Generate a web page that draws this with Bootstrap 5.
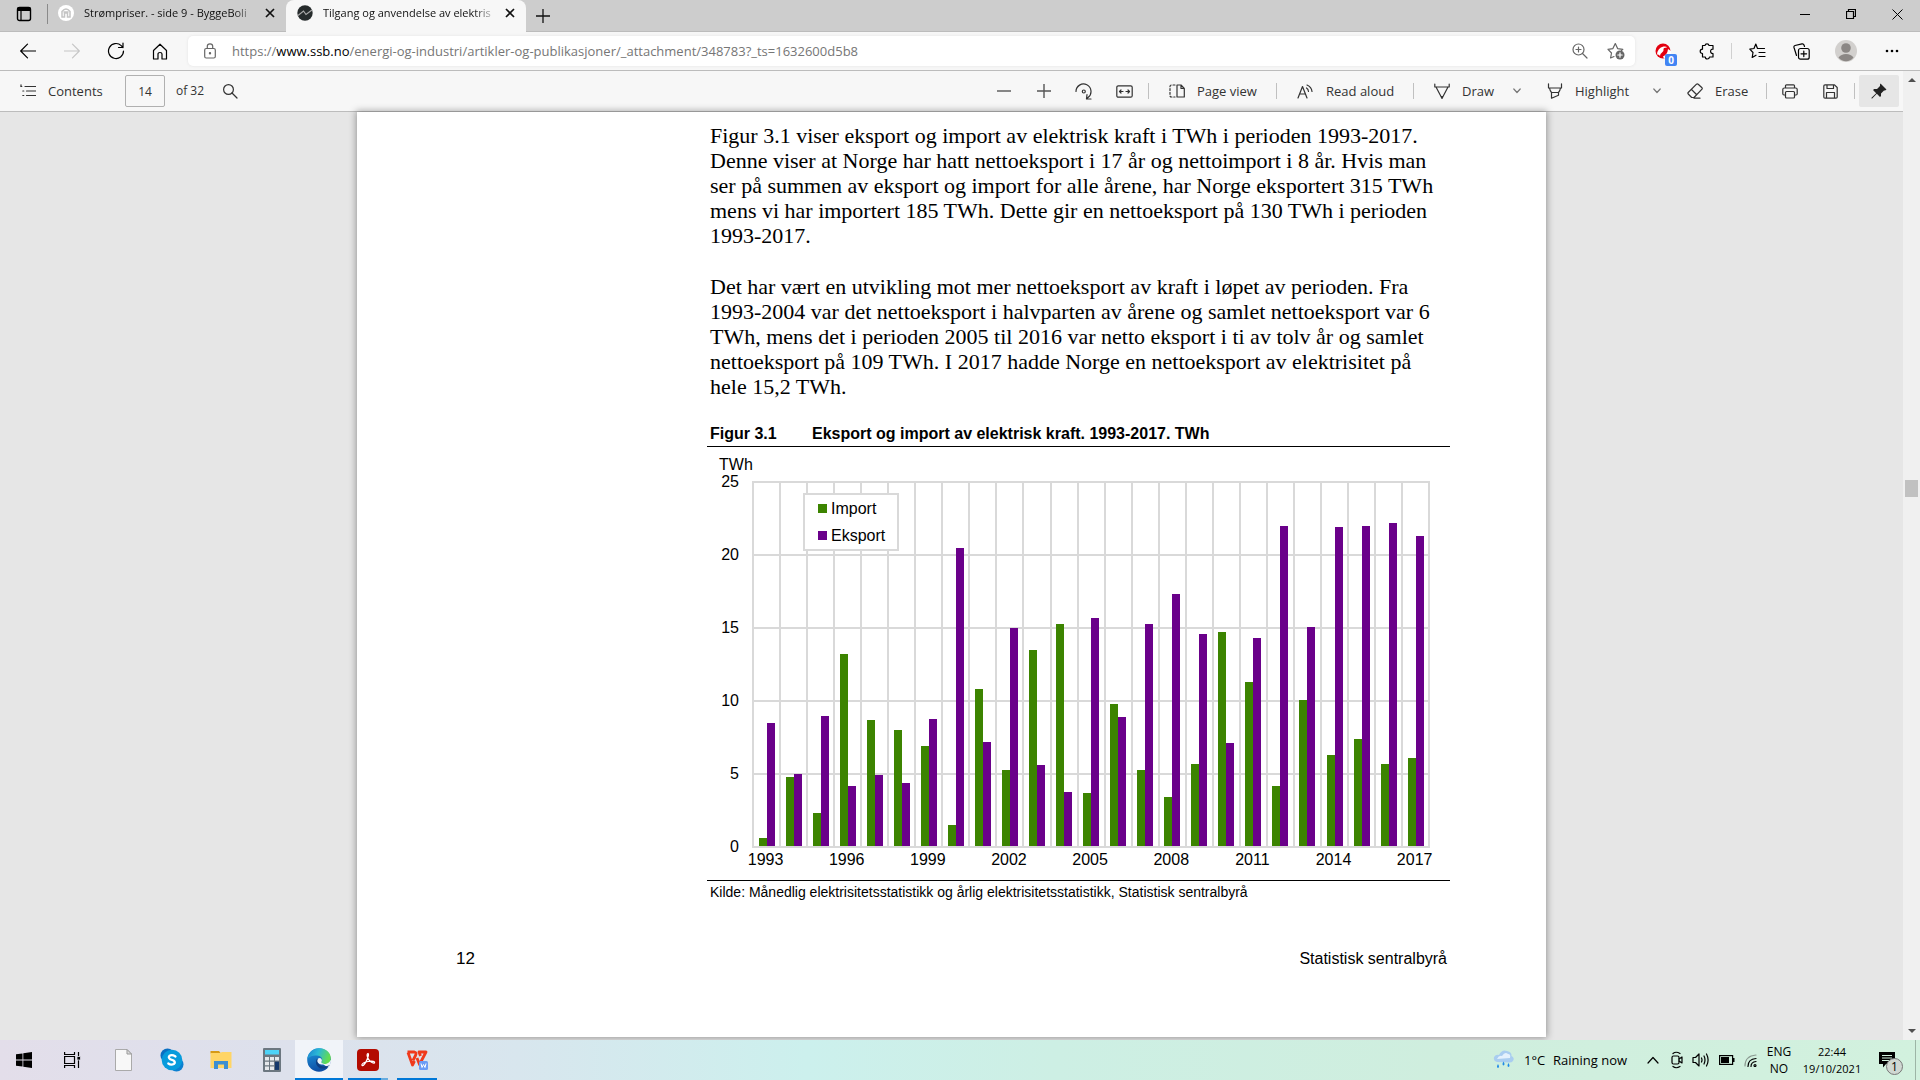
<!DOCTYPE html>
<html lang="no">
<head>
<meta charset="utf-8">
<meta name="viewport" content="width=device-width, initial-scale=1">
<title>Tilgang og anvendelse av elektrisitet</title>
<link href="https://cdn.jsdelivr.net/npm/bootstrap@5.3.0/dist/css/bootstrap.min.css" rel="stylesheet">
<style>
  body { font-family: "Open Sans", "Noto Sans", sans-serif; font-size: 13px; line-height: 20px; color: #000; background: #e6e6e6; }
  svg { display: block; flex: none; }
  .ln { fill: none; stroke: currentColor; stroke-width: 1.2; stroke-linecap: round; stroke-linejoin: round; }
  .plainbtn { background: none; border: 0; padding: 0; color: inherit; font-size: inherit; line-height: inherit; display: flex; align-items: center; justify-content: center; flex: none; }
  .w24 { width: 24px; } .w26 { width: 26px; } .w34 { width: 34px; } .w36 { width: 36px; } .w40 { width: 40px; } .w44 { width: 44px; } .w46 { width: 46px; } .w47 { width: 47px; } .w48 { width: 48px; } .w54 { width: 54px; }
  .divider { width: 1px; flex: none; background: #c0c0c0; }

  .tabstrip { height: 32px; background: #cdcdcd; border-bottom: 1px solid #bcbcbc; }
  .tabstrip .divider { height: 20px; background: #8a8a8a; }
  .tabitem { width: 238px; height: 32px; padding: 0 10px 6px 10px; gap: 10px; font-size: 11px; }
  .tabitem.current { width: 240px; background: #f7f7f7; border-radius: 8px 8px 0 0; padding-left: 11px; }
  .tabitem a { flex: 1 1 0; white-space: nowrap; color: #111; text-decoration: none; margin-right: -4px;
    -webkit-mask-image: linear-gradient(90deg, #000 86%, transparent); mask-image: linear-gradient(90deg, #000 86%, transparent); }
  .winbtn { height: 28px; }

  .navrow { height: 39px; padding: 0 5px 0 6px; background: #f7f7f7; border-bottom: 1px solid #bcbcbc; }
  .addressbox { height: 30px; margin: 0 6px; padding: 0 1px 0 16px; background: #fff; border-radius: 5px; box-shadow: 0 0 3px #e2e2e2; color: #666; }
  .urlfield { flex: 1 1 0; margin-left: 16px; }
  .urlfield a { color: #767676; text-decoration: none; } .urlfield b { font-weight: 400; color: #000; }
  .navrow .divider { height: 16px; margin: 0 3px 0 2px; background: #d0d0d0; }
  .countbadge { position: absolute; left: 24px; top: 11px; width: 12px; height: 12px; border-radius: 2px; background: #4285f4; color: #fff; font-size: 10px; line-height: 12px; font-weight: 700; }

  .pdfbar { height: 41px; background: #f7f7f7; border-bottom: 1px solid #bcbcbc; color: #333; padding-right: 4px; white-space: nowrap; }
  .pdfbar .divider { height: 16px; }
  .toolbtn { height: 32px; justify-content: flex-start; gap: 12px; padding-left: 20px; }
  .t-view { width: 127px; } .t-read { width: 136px; } .t-draw { width: 90px; } .t-high { width: 114px; padding-left: 17px; } .t-erase { width: 96px; padding-left: 17px; }
  .t-cont { width: 125px; }
  .pagebox { width: 40px; height: 32px; border: 1px solid #b0b0b0; border-radius: 2px; background: #f7f7f7; text-align: center; font-size: 12px; color: #333; padding: 0; }
  .pagecount { width: 45px; padding-left: 11px; font-size: 12px; }
  .sep-print { margin-right: 3px; }
  .w26 { color: #777; }
  .pinbtn { height: 32px; background: #e6e6e6; border-radius: 2px; color: #222; }

  .scrollcol { width: 17px; background: #f0f0f0; flex: none; }
  .scrollcol .arrowcell { height: 18px; }
  .before-thumb { flex: 391 0 0; } .after-thumb { flex: 525 0 0; }
  .thumb { height: 17px; width: 13px; background: #c1c1c1; }

  .sheet { width: 100%; max-width: 1189px; margin: 0 auto 3px; background: #fff; box-shadow: 0 0 7px 1px rgba(0,0,0,.35); padding: 11px 96px 66px 350px; font-family: "Liberation Sans", Arial, sans-serif; font-size: 16px; line-height: 24px; }
  .prose { font-family: "Liberation Serif", "Times New Roman", serif; font-size: 22px; line-height: 25px; margin: 0 0 26px 3px; white-space: nowrap; }
  .figtitle { display: flex; margin: -3px 0 0; padding-left: 3px; font-size: 16px; line-height: 24px; font-weight: 700; border-bottom: 1px solid #000; }
  .figtitle span:first-child { width: 102px; }
  .unit { margin: 6px 0 4px 12px; }
  .yaxis { width: 45px; padding-right: 13px; margin: -11px 0; text-align: right; }
  .plotrow { padding-right: 20px; }
  .plot { position: relative; display: grid; height: 367px; }
  .plot > .hlines, .plot > .bars { grid-area: 1 / 1; }
  .hlines { display: flex; flex-direction: column; justify-content: space-between; }
  .hlines i { height: 2px; background: #d9d9d9; }
  .bars { display: flex; margin: 1px 0; border-right: 2px solid #d9d9d9; }
  .year { flex: 1 1 0; border-left: 2px solid #d9d9d9; display: flex; align-items: flex-end; justify-content: center; }
  .year i { width: 8px; height: calc(var(--v) * 4% - 1px); margin-bottom: 1px; }
  .imp { background: #3c8400; } .eks { background: #6a008a; }
  .legendbox { position: absolute; left: 51px; top: 12px; width: 96px; height: 58px; padding-left: 13px; background: #fff; border: 2px solid #d9d9d9; display: flex; flex-direction: column; justify-content: space-around; }
  .legendbox div { display: flex; align-items: center; gap: 4px; }
  .legendbox i { width: 9px; height: 9px; }
  .xaxis { margin: 0 20px 8px 45px; display: flex; padding-right: 2px; }
  .xaxis span { flex: 1 1 0; width: 0; display: flex; justify-content: center; }
  .source { border-top: 1px solid #000; padding: 1px 0 0 3px; font-size: 14px; line-height: 20px; margin: 0; }
  .sheetfoot { display: flex; justify-content: space-between; margin: 45px 3px 0 -251px; }
  .sheetfoot span:first-child { font-size: 17px; }

  .taskbar { height: 40px; background: linear-gradient(90deg, #e3deea 0, #dde1ec 15%, #d8e6ee 27%, #ccf0ed 42%, #cdefe4 55%, #cfeede 75%, #d2f1de 100%); }
  .appbtn { height: 40px; border-bottom: 2px solid transparent; padding-top: 2px; }
  .open-app { border-bottom-color: #0078d7; }
  .front-app { background: #f1f4f9; }
  .stack-app { margin: 0 9px 0 5px; border-image: linear-gradient(90deg, #0078d7 80%, #67acdf 80%) 1; border-width: 0 0 2px; border-style: solid; }
  .tray { font-size: 13px; line-height: 18px; }
  .temp { width: 29px; margin-left: 9px; } .weather { width: 88px; }
  .trayicons { gap: 9px; margin-left: 6px; }
  .small-status { width: 44px; font-size: 12px; line-height: 17px; text-align: center; }
  .clock { width: 62px; font-size: 11px; }
  .notebtn { margin-right: 4px; }
  .notebadge { position: absolute; left: 23px; top: 6px; width: 17px; height: 17px; border: 1px solid #777; border-radius: 50%; background: #d0d8d2; font-size: 12px; line-height: 15px; text-align: center; }
  .showdesk { background: #9db5a6; }
</style>
</head>
<body class="d-flex flex-column vh-100 overflow-hidden">

<header class="flex-shrink-0">
  <div class="tabstrip d-flex">
    <button class="plainbtn winbtn w47" aria-label="Tab actions"><svg width="16" height="16" viewBox="0 0 16 16"><rect x="1.5" y="1.5" width="13" height="13" rx="2" fill="none" stroke="#000" stroke-width="1.4"/><path d="M1 2.500Q1 1 3 1H13Q15 1 15 3V5H1z"/><path d="M5 4V15" stroke="#000" stroke-width="1.2"/></svg></button>
    <span class="divider mt-1"></span>
    <div class="tabitem d-flex align-items-center">
      <svg width="16" height="16" viewBox="0 0 16 16"><circle cx="8" cy="8" r="8" fill="#fff"/><path d="M4 12V6.500Q8 1.500 12 6.500V12H9.500V8H6.500V12zM5.500 7H10.500" fill="none" stroke="#c4c4c4" stroke-width="1.500"/></svg>
      <a href="#">Strømpriser. - side 9 - ByggeBoli</a>
      <button class="plainbtn" aria-label="Close tab"><svg width="12" height="12" viewBox="0 0 12 12"><path d="M2 2l8 8M10 2l-8 8" stroke="#111" stroke-width="1.700"/></svg></button>
    </div>
    <div class="tabitem current d-flex align-items-center">
      <svg width="16" height="16" viewBox="0 0 16 16"><circle cx="8" cy="8" r="7.700" fill="#262b2c"/><path d="M1 10.500L6.500 6L9 9.500L15 5" fill="none" stroke="#aaa" stroke-width="1.200"/></svg>
      <a href="#">Tilgang og anvendelse av elektris</a>
      <button class="plainbtn" aria-label="Close tab"><svg width="12" height="12" viewBox="0 0 12 12"><path d="M2 2l8 8M10 2l-8 8" stroke="#111" stroke-width="1.700"/></svg></button>
    </div>
    <button class="plainbtn w34" aria-label="New tab"><svg width="14" height="14" viewBox="0 0 14 14"><path d="M7 0V14M0 7H14" stroke="#111" stroke-width="1.300"/></svg></button>
    <div class="d-flex ms-auto">
      <button class="plainbtn winbtn w46" aria-label="Minimize"><svg width="10" height="10" viewBox="0 0 10 10"><path d="M0 5.500H10" stroke="#000"/></svg></button>
      <button class="plainbtn winbtn w46" aria-label="Restore"><svg width="10" height="10" viewBox="0 0 10 10"><path d="M.5 2.500H7.500V9.500H.5zM2.500 2.500V.5H9.500V7.500H7.500" fill="none" stroke="#000" stroke-width="1.200"/></svg></button>
      <button class="plainbtn winbtn w46" aria-label="Close"><svg width="11" height="11" viewBox="0 0 11 11"><path d="M.5.5l10 10M10.500.5l-10 10" stroke="#000"/></svg></button>
    </div>
  </div>

  <div class="navrow d-flex align-items-center">
    <button class="plainbtn w44" aria-label="Back"><svg class="ln" width="16" height="16" viewBox="0 0 16 16"><path d="M15.500 8H.7M7.500 1.200L.7 8l6.800 6.800"/></svg></button>
    <button class="plainbtn w44" aria-label="Forward" disabled><svg class="ln" width="16" height="16" viewBox="0 0 16 16"><path stroke="#c6c6c6" d="M.5 8H15.300M8.500 1.200L15.300 8l-6.800 6.800"/></svg></button>
    <button class="plainbtn w44" aria-label="Refresh"><svg class="ln" width="18" height="18" viewBox="0 0 18 18"><path d="M16.500 9a7.500 7.500 0 1 1-2.300-5.400L16 5.500M16 1v4.500h-4.500"/></svg></button>
    <button class="plainbtn w44" aria-label="Home"><svg class="ln" width="16" height="17" viewBox="0 0 16 17"><path d="M1.500 7.500L8 1.200l6.500 6.300V16H10V11Q10 9.500 8 9.500T6 11V16H1.500z"/></svg></button>
    <div class="addressbox d-flex align-items-center flex-fill">
      <svg class="ln" width="12" height="16" viewBox="0 0 12 16"><rect x=".7" y="5.500" width="10.600" height="9.500" rx="1.500"/><path d="M3.300 5.500V3.200Q3.300.8 6 .8T8.700 3.200V5.500"/><circle cx="6" cy="10.200" r=".6" fill="currentColor"/></svg>
      <span class="urlfield"><a href="#">https://<b>www.ssb.no</b>/energi-og-industri/artikler-og-publikasjoner/_attachment/348783?_ts=1632600d5b8</a></span>
      <button class="plainbtn w36" aria-label="Zoom"><svg class="ln" width="16" height="16" viewBox="0 0 16 16"><circle cx="6.500" cy="6.500" r="5.500"/><path d="M10.500 10.500L15 15M6.500 4V9M4 6.500H9"/></svg></button>
      <button class="plainbtn w36" aria-label="Add to favourites"><svg class="ln" width="18" height="18" viewBox="0 0 18 18"><path d="M7 14.500L3.600 16l.9-5L1 7.300l4.900-.7L8.300 1.500l2.300 5.100 5.200.7L14.500 8.500"/><circle cx="13" cy="13" r="4.500" fill="#666" stroke="none"/><path d="M13 10.800v4.400M10.800 13h4.400" stroke="#fff"/></svg></button>
    </div>
    <button class="plainbtn w44 position-relative" aria-label="Extension"><svg width="16" height="16" viewBox="0 0 16 16"><circle cx="8" cy="8" r="7.500" fill="#e3000f"/><path d="M2 11.500Q2.500 5 8.500 3.500Q11.500 3 12 4.500Q8 4.500 8.500 6.500Q9 8 7 9.500Q5 10.500 5 13Q4 11 2 11.500zM8 13.500Q12.500 11.500 13 6L16 8V13L9 15.500z" fill="#fff"/></svg><span class="countbadge">0</span></button>
    <button class="plainbtn w44" aria-label="Extensions"><svg class="ln" width="17" height="17" viewBox="0 0 17 17"><path d="M3.500 2.500H6Q6.200.8 8 .8T10 2.500H14V6.200Q11.600 6 11.600 8.300T14 10.500V14H10.500Q10.300 16 8.300 16T6.300 14H3.500V10.500Q1.200 10.300 1.200 8.300T3.500 6.200z"/></svg></button>
    <span class="divider"></span>
    <button class="plainbtn w44" aria-label="Favourites"><svg class="ln" width="17" height="16" viewBox="0 0 17 16"><path d="M8.500 5.500L6.800 1L5 5.500L.8 6.200L4 9.500L3.200 14.500L7 12.200M8.500 5.500H15.500M10 9.500H16M10 13.500H16"/></svg></button>
    <button class="plainbtn w44" aria-label="Collections"><svg class="ln" width="17" height="17" viewBox="0 0 17 17"><rect x="5.500" y="5.500" width="10.700" height="10.700" rx="2"/><path d="M10.800 8v5.600M8 10.800h5.600M3.500 12.500L1 4.500Q.6 3 2 2.500L9 .9Q10.500.6 11 2L11.500 3.500"/></svg></button>
    <button class="plainbtn w46" aria-label="Profile"><svg width="22" height="22" viewBox="0 0 22 22"><circle cx="11" cy="11" r="11" fill="#d2d0ce"/><circle cx="11" cy="8" r="4.800" fill="#8b8785"/><path d="M3.500 17.500Q6 14 11 14T18.500 17.500Q15.500 21.300 11 21.300T3.500 17.500z" fill="#8b8785"/></svg></button>
    <button class="plainbtn w46" aria-label="Settings and more"><svg width="14" height="4" viewBox="0 0 14 4"><circle cx="2" cy="2" r="1.300"/><circle cx="7" cy="2" r="1.300"/><circle cx="12" cy="2" r="1.300"/></svg></button>
  </div>
</header>

<main class="d-flex flex-fill overflow-hidden">
  <div class="flex-fill d-flex flex-column overflow-hidden">
    <div class="pdfbar d-flex align-items-center flex-shrink-0">
      <button class="plainbtn toolbtn t-cont"><svg class="ln" width="16" height="14" viewBox="0 0 16 14"><path d="M5 2.500H15.500M6.500 7H15.500M6.500 11.500H15.500M.8 2.500H1.800M2.800 7H3.800M2.800 11.500H3.800M1 .8V2.500"/></svg>Contents</button>
      <input id="pageno" class="pagebox" type="text" value="14">
      <label for="pageno" class="pagecount">of 32</label>
      <button class="plainbtn w40" aria-label="Find"><svg class="ln" width="16" height="16" viewBox="0 0 16 16"><circle cx="6.500" cy="6.500" r="4.900"/><path d="M10 10L15 15"/></svg></button>
      <div class="d-flex align-items-center ms-auto">
        <button class="plainbtn w40" aria-label="Zoom out"><svg width="14" height="14" viewBox="0 0 14 14"><path d="M0 7H14" stroke="#555" stroke-width="1.400"/></svg></button>
        <button class="plainbtn w40" aria-label="Zoom in"><svg width="14" height="14" viewBox="0 0 14 14"><path d="M0 7H14M7 0V14" stroke="#555" stroke-width="1.400"/></svg></button>
        <button class="plainbtn w40" aria-label="Rotate"><svg class="ln" width="18" height="17" viewBox="0 0 18 17"><path d="M1 8.500A7.500 7.500 0 1 1 13 14.500L11.500 15.700M12 11.500L11.500 15.900L16 16"/><circle cx="8.800" cy="8.500" r="1.500"/></svg></button>
        <button class="plainbtn w40" aria-label="Fit to width"><svg class="ln" width="17" height="13" viewBox="0 0 17 13"><rect x=".8" y=".8" width="15.400" height="11.400" rx="1.500"/><path d="M3.500 6.500H7M5 5L3.500 6.500L5 8M10 6.500H13.500M12 5L13.500 6.500L12 8"/></svg></button>
        <span class="divider ms-1"></span>
        <button class="plainbtn toolbtn t-view"><svg class="ln" width="16" height="14" viewBox="0 0 16 14"><path d="M8 1H12L15.300 4.500V13H8zM12 1V4.500H15.300"/><path d="M6 1H2.500Q1 1 1 2.500V11.500Q1 13 2.500 13H6" stroke-dasharray="2 1.800"/></svg>Page view</button>
        <span class="divider"></span>
        <button class="plainbtn toolbtn t-read"><svg class="ln" width="17" height="15" viewBox="0 0 17 15"><path d="M1 14L5.500 2.500L10 14M2.800 10H8.200M9.500 4Q11.300 5 11.500 7.500M10 1Q14.500 3 15 7.500"/></svg>Read aloud</button>
        <span class="divider"></span>
        <button class="plainbtn toolbtn t-draw"><svg class="ln" width="16" height="16" viewBox="0 0 16 16"><path d="M.8 1V4H15.200V1M2 4L7 13.500H9L14 4M7 13.500L8 15.500L9 13.500z"/></svg>Draw</button>
        <button class="plainbtn w26" aria-label="Draw options"><svg class="ln" width="8" height="6" viewBox="0 0 8 6"><path d="M.8 1L4 4.500L7.200 1"/></svg></button>
        <button class="plainbtn toolbtn t-high"><svg class="ln" width="16" height="16" viewBox="0 0 16 16"><path d="M1.500.8V5H14.500V.8M2.500 5Q3 8 4.500 9.500H11.500Q13 8 13.500 5M4.500 9.500V15.200L11.500 12.200V9.500"/></svg>Highlight</button>
        <button class="plainbtn w26" aria-label="Highlight options"><svg class="ln" width="8" height="6" viewBox="0 0 8 6"><path d="M.8 1L4 4.500L7.200 1"/></svg></button>
        <button class="plainbtn toolbtn t-erase"><svg class="ln" width="16" height="16" viewBox="0 0 16 16"><path d="M9.500 1.200L1.200 9.500Q.6 10.200 1.200 11L4.700 14.500H7L15 6.200Q15.500 5.500 15 4.800L11.200 1.200Q10.300.5 9.500 1.200zM4.500 6.500L9.500 11.500M7 15.200H13"/></svg>Erase</button>
        <span class="divider sep-print"></span>
        <button class="plainbtn w40" aria-label="Print"><svg class="ln" width="16" height="15" viewBox="0 0 16 15"><path d="M3.500 4V1.800Q3.500.8 4.500.8H11.500Q12.500.8 12.500 1.800V4M3.500 11H2Q.8 11 .8 9.800V5.500Q.8 4 2.300 4H13.700Q15.200 4 15.200 5.500V9.800Q15.200 11 14 11H12.500"/><rect x="3.500" y="7.500" width="9" height="6.500" rx="1"/></svg></button>
        <button class="plainbtn w40" aria-label="Save"><svg class="ln" width="15" height="15" viewBox="0 0 15 15"><path d="M2 .8H11.500L14.200 3.500V13Q14.200 14.200 13 14.200H2Q.8 14.200.8 13V2Q.8.8 2 .8zM4 .8V4.500H10.500V.8M3.500 14V8.500H11.500V14"/></svg></button>
        <span class="divider ms-1 me-1"></span>
        <button class="plainbtn pinbtn w40" aria-label="Unpin toolbar"><svg width="16" height="16" viewBox="0 0 16 16"><path d="M9.500.5L15.500 6.500L14 7.500H13L10 10.500V13L9 14L5.800 10.800L1.200 15.500L.5 15.500V14.800L5.200 10.200L2 7L3.200 6H6L9 3V1.500z" fill="currentColor"/></svg></button>
      </div>
    </div>

    <article class="sheet">
      <p class="prose">Figur 3.1 viser eksport og import av elektrisk kraft i TWh i perioden 1993-2017.<br>Denne viser at Norge har hatt nettoeksport i 17 år og nettoimport i 8 år. Hvis man<br>ser på summen av eksport og import for alle årene, har Norge eksportert 315 TWh<br>mens vi har importert 185 TWh. Dette gir en nettoeksport på 130 TWh i perioden<br>1993-2017.</p>
      <p class="prose">Det har vært en utvikling mot mer nettoeksport av kraft i løpet av perioden. Fra<br>1993-2004 var det nettoeksport i halvparten av årene og samlet nettoeksport var 6<br>TWh, mens det i perioden 2005 til 2016 var netto eksport i ti av tolv år og samlet<br>nettoeksport på 109 TWh. I 2017 hadde Norge en nettoeksport av elektrisitet på<br>hele 15,2 TWh.</p>
      <h2 class="figtitle"><span>Figur 3.1</span><span>Eksport og import av elektrisk kraft. 1993-2017. TWh</span></h2>
      <div class="unit">TWh</div>
      <div class="plotrow d-flex">
        <div class="yaxis d-flex flex-column justify-content-between flex-shrink-0"><span>25</span><span>20</span><span>15</span><span>10</span><span>5</span><span>0</span></div>
        <div class="plot flex-fill">
          <div class="hlines"><i></i><i></i><i></i><i></i><i></i><i></i></div>
          <div class="bars" id="bars"></div>
          <div class="legendbox"><div><i class="imp"></i>Import</div><div><i class="eks"></i>Eksport</div></div>
        </div>
      </div>
      <div class="xaxis" id="xaxis"></div>
      <p class="source">Kilde: Månedlig elektrisitetsstatistikk og årlig elektrisitetsstatistikk, Statistisk sentralbyrå</p>
      <footer class="sheetfoot"><span>12</span><span>Statistisk sentralbyrå</span></footer>
    </article>
  </div>
  <div class="scrollcol d-flex flex-column align-items-center">
    <div class="arrowcell d-flex align-items-center"><svg width="8" height="4" viewBox="0 0 8 4"><path d="M0 4L4 0L8 4z" fill="#505050"/></svg></div>
    <div class="before-thumb"></div><div class="thumb"></div><div class="after-thumb"></div>
    <div class="arrowcell d-flex align-items-center"><svg width="8" height="4" viewBox="0 0 8 4"><path d="M0 0L4 4L8 0z" fill="#505050"/></svg></div>
  </div>
</main>

<footer class="taskbar d-flex flex-shrink-0">
  <button class="plainbtn appbtn w48" aria-label="Start"><svg width="16" height="16" viewBox="0 0 16 16"><path d="M0 2.300L6.500 1.400V7.500H0zM7.300 1.300L16 0V7.500H7.300zM0 8.400H6.500V14.600L0 13.700zM7.300 8.400H16V16L7.300 14.700z"/></svg></button>
  <button class="plainbtn appbtn w48" aria-label="Task view"><svg width="17" height="16" viewBox="0 0 17 16"><path d="M.6 0V2.500H10.500V0M.6 16V13.500H10.500V16M.6 4.500H10.500V11.500H.6zM14.500 0V16" fill="none" stroke="#000" stroke-width="1.200"/><path d="M13 4.500h3.500v3.500H13z" stroke="#dfdeea" stroke-width=".8"/></svg></button>
  <button class="plainbtn appbtn w54" aria-label="Document"><svg width="17" height="22" viewBox="0 0 17 22"><path d="M.5.5H12L16.500 5V21.500H.5z" fill="#f8f8f8" stroke="#aaa"/><path d="M12 .5V5H16.500z" fill="#ddd" stroke="#999"/></svg></button>
  <button class="plainbtn appbtn w44" aria-label="Skype"><svg width="24" height="24" viewBox="0 0 24 24"><circle cx="7.500" cy="7.500" r="7" fill="#0a6fc2"/><circle cx="16.500" cy="16.500" r="7" fill="#0c7fd0"/><circle cx="12" cy="12" r="10.300" fill="#079bdc"/><path d="M15.500 8.500Q12 6.300 9.500 7.800Q7.800 9.700 10.300 11.200L13.500 12.500Q16 14.300 13.800 16Q11 17.500 8.300 15.500" fill="none" stroke="#fff" stroke-width="2.300" stroke-linecap="round"/></svg></button>
  <button class="plainbtn appbtn w54" aria-label="File Explorer"><svg width="22" height="20" viewBox="0 0 22 20"><path d="M.5 1H9L11 3.500H0.500z" fill="#d69a16"/><path d="M.5 3H10L12 2H21.500V18H.5z" fill="#ffd566"/><path d="M4 19V11H18V19H14V14.500H8V19z" fill="#3d8ed0"/></svg></button>
  <button class="plainbtn appbtn w47" aria-label="Calculator"><svg width="18" height="24" viewBox="0 0 18 24"><rect width="18" height="24" rx="1" fill="#6c7780"/><path d="M2 2H16V6.500H2z" fill="#4dd3f7"/><path d="M2 9h4v3.500H2zM7 9h4v3.500H7zM12 9h4v3.500h-4zM2 13.700h4v3.500H2zM7 13.700h4v3.500H7zM2 18.400h4v3.500H2zM7 18.400h4v3.500H7z" fill="#e6e9ec"/><path d="M12 13.700h4v8.200h-4z" fill="#15386b"/></svg></button>
  <button class="plainbtn appbtn w48 open-app front-app" aria-label="Edge"><svg width="24" height="24" viewBox="0 0 24 24"><defs><linearGradient id="ga" x1="0" y1="0" x2="1" y2=".3"><stop offset="0" stop-color="#1b7fd0"/><stop offset=".5" stop-color="#2bb8d6"/><stop offset="1" stop-color="#62dc51"/></linearGradient><linearGradient id="gb" x1="0" y1="0" x2=".3" y2="1"><stop offset="0" stop-color="#1f9be0"/><stop offset="1" stop-color="#0f4fa5"/></linearGradient></defs><circle cx="12" cy="12" r="11.800" fill="url(#gb)"/><path d="M24 12Q24 17 21 19.500L14 15z" fill="#f1f4f9"/><path d="M.2 11.500C1 4.500 6 .2 12 .2C19 .2 24 5 23.800 10.500C23.600 14.500 20 16 17.500 16C15 16 13.700 15 14.500 14C16.300 11.500 14.500 7.500 10 7.500C5 7.500 1.500 9 .2 11.500z" fill="url(#ga)"/><path d="M9.500 11.500C7.500 16 11 21.500 17 20.500C19.500 20 21.500 18.500 22.500 17C20 19 12.500 19.500 11 14.500C10.700 13 11 12 11.500 10.500z" fill="#103f83"/><path d="M11 10.500Q14 9 14.900 12Q15 13 14.300 14.300Q14 15.500 17 16Q13 17.500 11 14.800Q9.800 12.500 11 10.500z" fill="#eef5fa"/></svg></button>
  <button class="plainbtn appbtn stack-app w40" aria-label="Acrobat"><svg width="22" height="22" viewBox="0 0 22 22"><rect width="22" height="22" rx="4" fill="#b30b00"/><path d="M11 4.500Q9.500 5 10.500 8Q12 12.500 16 14Q18 14.500 17.500 13Q16 11.500 11 12.500Q6 13.500 5 15.500Q4.700 17 6.200 16.500Q9 14 11 8Q12 5 11 4.500z" fill="none" stroke="#fff" stroke-width="1.200"/></svg></button>
  <button class="plainbtn appbtn open-app w40" aria-label="WPS Office"><svg width="22" height="20" viewBox="0 0 22 20"><path d="M1.500 2H8.500Q11 2.500 9.500 5.500L7 10.500M2 2.500L6.500 15L8.500 11M11 8L13.500 14.500L20 2H13L14.500 6" fill="none" stroke="#f0391b" stroke-width="2.800" stroke-linejoin="round"/><rect x="13" y="11" width="9" height="9" rx="1.500" fill="#6b9cf5"/><path d="M15 13.500l1 4 1.500-3 1.500 3 1-4" fill="none" stroke="#fff"/></svg></button>

  <div class="tray d-flex align-items-center ms-auto">
    <svg width="22" height="22" viewBox="0 0 22 22"><path d="M4 13Q0 12 1 8Q3 5 6 6Q9 0 14 2Q19 3 18.500 7Q22 9 20 12Q19 13.500 16 13.500z" fill="#a9cdf0"/><path d="M4 10Q6 6 9 7Q12 2 15 5Q18 5 17 9z" fill="#e4f1fd"/><path d="M5 15q-2 3 0 4 2-1 0-4zM10.500 12.500q-2 3 0 4 2-1 0-4zM15.500 14q-2 3 0 4 2-1 0-4z" fill="#1f8be8"/></svg>
    <span class="temp">1°C</span>
    <span class="weather">Raining now</span>
    <button class="plainbtn w24" aria-label="Hidden icons"><svg class="ln" width="12" height="8" viewBox="0 0 12 8"><path d="M1 7L6 1.500L11 7"/></svg></button>
    <div class="trayicons d-flex align-items-center">
      <svg class="ln" width="12" height="18" viewBox="0 0 12 18"><rect x="1" y="5" width="7" height="8" rx="1.500"/><path d="M8 8L11 6V12L8 10M2 2.500Q5 0 9 2.500M2 15.500Q5 18 9 15.500"/></svg>
      <svg class="ln" width="18" height="16" viewBox="0 0 18 16"><path d="M1 5.500H3.500L7 2V14L3.500 10.500H1zM9.500 6Q10.500 8 9.500 10M12 4Q14 8 12 12M14.500 2Q17.700 8 14.500 14"/></svg>
      <svg width="16" height="10" viewBox="0 0 16 10"><rect x=".6" y=".6" width="13" height="8.800" fill="none" stroke="#000" stroke-width="1.200"/><path d="M2 2H10V8H2zM14 3H15.500V7H14z"/></svg>
      <svg class="ln" width="13" height="13" viewBox="0 0 13 13"><path d="M1 12Q1 2 12 1" stroke="#8b9a91"/><path d="M4 12.500Q4 5 12 4.500M7 12.500Q7 8 12 7.500"/><circle cx="11" cy="11.500" r="1"/></svg>
    </div>
    <div class="small-status"><div>ENG</div><div>NO</div></div>
    <div class="small-status clock"><div>22:44</div><div>19/10/2021</div></div>
    <button class="plainbtn position-relative w48 notebtn" aria-label="Notifications"><svg width="16" height="16" viewBox="0 0 16 16"><path d="M0 0H16V12H7L4 15.500V12H0z"/><path d="M3 3.500H13M3 6H13M3 8.500H10" stroke="#d2f1de"/></svg><span class="notebadge">1</span></button>
    <span class="divider showdesk align-self-stretch me-1"></span>
  </div>
</footer>

<script>
  // TWh per year, 1993-2017: [import, eksport]
  const twh = [[.6,8.5],[4.8,5],[2.3,9],[13.2,4.2],[8.7,4.9],[8,4.4],[6.9,8.8],[1.5,20.5],[10.8,7.2],[5.3,15],[13.5,5.6],[15.3,3.8],[3.7,15.7],[9.8,8.9],[5.3,15.3],[3.4,17.3],[5.7,14.6],[14.7,7.1],[11.3,14.3],[4.2,22],[10.1,15.1],[6.3,21.9],[7.4,22],[5.7,22.2],[6.1,21.3]];
  document.getElementById('bars').innerHTML = twh.map(([a, b]) => `<div class="year"><i class="imp" style="--v:${a}"></i><i class="eks" style="--v:${b}"></i></div>`).join('');
  document.getElementById('xaxis').innerHTML = twh.map((_, i) => `<span>${i % 3 ? '' : 1993 + i}</span>`).join('');
</script>
<script src="https://cdn.jsdelivr.net/npm/bootstrap@5.3.0/dist/js/bootstrap.bundle.min.js"></script>
</body>
</html>
